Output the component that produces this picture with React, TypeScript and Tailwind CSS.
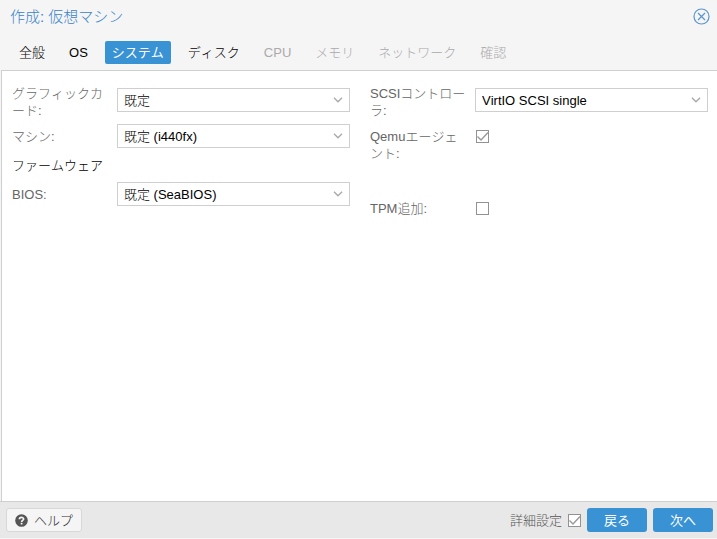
import { useState } from "react";

const tabs = [
  { label: "全般", enabled: true },
  { label: "OS", enabled: true },
  { label: "システム", enabled: true },
  { label: "ディスク", enabled: true },
  { label: "CPU", enabled: false },
  { label: "メモリ", enabled: false },
  { label: "ネットワーク", enabled: false },
  { label: "確認", enabled: false },
];

interface SelectFieldProps {
  id: string;
  label: string;
  options: string[];
}

function SelectField({ id, label, options }: SelectFieldProps) {
  return (
    <div className="flex items-center">
      <label
        htmlFor={id}
        className="w-[105px] shrink-0 self-start break-all pt-1 pr-[5px] text-[#666]"
      >
        {label}
      </label>
      <div className="relative min-w-0 flex-1">
        <select
          id={id}
          className="block h-6 w-full appearance-none border border-[#cfcfcf] bg-white pr-6 pl-1.5 text-black outline-none focus:border-[#3892d4]"
        >
          {options.map((option) => (
            <option key={option}>{option}</option>
          ))}
        </select>
        <svg
          viewBox="0 0 10 6"
          className="pointer-events-none absolute top-[9px] right-[7px] h-1.5 w-2.5"
          fill="none"
          stroke="#aaa"
          strokeWidth="1.4"
        >
          <path d="M1 0.8 L5 4.8 L9 0.8" />
        </svg>
      </div>
    </div>
  );
}

interface TickBoxProps {
  id: string;
  defaultChecked?: boolean;
}

function TickBox({ id, defaultChecked }: TickBoxProps) {
  return (
    <span className="relative block size-[13px]">
      <input
        id={id}
        type="checkbox"
        defaultChecked={defaultChecked}
        className="peer block size-[13px] appearance-none border border-[#929292] bg-white"
      />
      <svg
        viewBox="0 0 13 13"
        className="pointer-events-none absolute inset-0 hidden size-[13px] peer-checked:block"
        fill="none"
        stroke="#999"
        strokeWidth="1.4"
      >
        <path d="M1.5 6.5 L5 10 L12 2.5" />
      </svg>
    </span>
  );
}

function CheckField({ id, label, defaultChecked }: TickBoxProps & { label: string }) {
  return (
    <div className="flex min-h-6 items-start">
      <label
        htmlFor={id}
        className="w-[105px] shrink-0 break-all pt-1 pr-[5px] text-[#666]"
      >
        {label}
      </label>
      <div className="pt-1.5 pl-px">
        <TickBox id={id} defaultChecked={defaultChecked} />
      </div>
    </div>
  );
}

export default function App() {
  const [active, setActive] = useState("システム");

  return (
    <div className="flex min-h-screen flex-col bg-[#f5f5f5] pb-px font-['Liberation_Sans','Noto_Sans_CJK_JP',sans-serif] text-[13px] leading-[17px] font-light [font-kerning:none]">
      <header className="flex items-center justify-between pt-2 pr-[7px] pl-2.5">
        <h1 className="text-[15px] leading-[17px] text-[#3b82c9]">作成: 仮想マシン</h1>
        <button aria-label="閉じる" className="block">
          <svg
            viewBox="0 0 17 17"
            className="block size-[17px]"
            fill="none"
            stroke="#5b95cf"
            strokeWidth="1.2"
          >
            <circle cx="8.5" cy="8.5" r="7.5" />
            <path d="M5 5 L12 12 M12 5 L5 12" />
          </svg>
        </button>
      </header>

      <nav className="flex gap-2.5 px-3 pt-4 pb-1.5">
        {tabs.map((tab) => (
          <button
            key={tab.label}
            disabled={!tab.enabled}
            onClick={() => setActive(tab.label)}
            className={
              tab.label === active
                ? "h-[23px] rounded-xs bg-[#3892d4] px-[7px] font-normal whitespace-nowrap text-white"
                : "h-[23px] px-[7px] whitespace-nowrap text-black disabled:text-[#aaa]"
            }
          >
            {tab.label}
          </button>
        ))}
      </nav>

      <main className="ml-px grid flex-1 grid-cols-2 content-start gap-5 border-t border-l border-[#cfcfcf] bg-white pt-2.5 pr-[9px] pl-2.5">
        <section className="flex flex-col gap-[5px]">
          <SelectField id="vga" label="グラフィックカード:" options={["既定", "SPICE", "VirtIO-GPU"]} />
          <SelectField id="machine" label="マシン:" options={["既定 (i440fx)", "q35"]} />
          <h2 className="h-6 pt-1 text-black">ファームウェア</h2>
          <SelectField id="bios" label="BIOS:" options={["既定 (SeaBIOS)", "OVMF (UEFI)"]} />
        </section>
        <section className="flex flex-col gap-[5px]">
          <SelectField id="scsi" label="SCSIコントローラ:" options={["VirtIO SCSI single", "VirtIO SCSI"]} />
          <CheckField id="agent" label="Qemuエージェント:" defaultChecked />
          <div className="h-6" />
          <CheckField id="tpm" label="TPM追加:" />
        </section>
      </main>

      <footer className="flex h-[37px] items-center justify-between border-t border-[#cfcfcf] bg-[#e8e8e8] pr-1 pl-1.5">
        <button className="flex h-6 items-center gap-1.5 rounded-[3px] border border-[#d8d8d8] bg-[#f5f5f5] px-2 text-[#333]">
          <svg viewBox="0 0 13 13" className="size-[13px]">
            <circle cx="6.5" cy="6.5" r="6.3" fill="#555" />
            <path
              d="M4.4 5.2 C4.4 2.9 8.6 2.9 8.6 5.1 C8.6 6.4 6.6 6.3 6.6 7.9"
              fill="none"
              stroke="#f5f5f5"
              strokeWidth="1.7"
            />
            <rect x="5.7" y="8.8" width="1.8" height="1.7" fill="#f5f5f5" />
          </svg>
          ヘルプ
        </button>
        <div className="flex items-center gap-1.5">
          <label htmlFor="advanced" className="text-[#555]">
            詳細設定
          </label>
          <TickBox id="advanced" defaultChecked />
          <button className="h-6 w-[60px] rounded-[3px] bg-[#3892d4] font-normal text-white">戻る</button>
          <button className="h-6 w-[60px] rounded-[3px] bg-[#3892d4] font-normal text-white">次へ</button>
        </div>
      </footer>
    </div>
  );
}
